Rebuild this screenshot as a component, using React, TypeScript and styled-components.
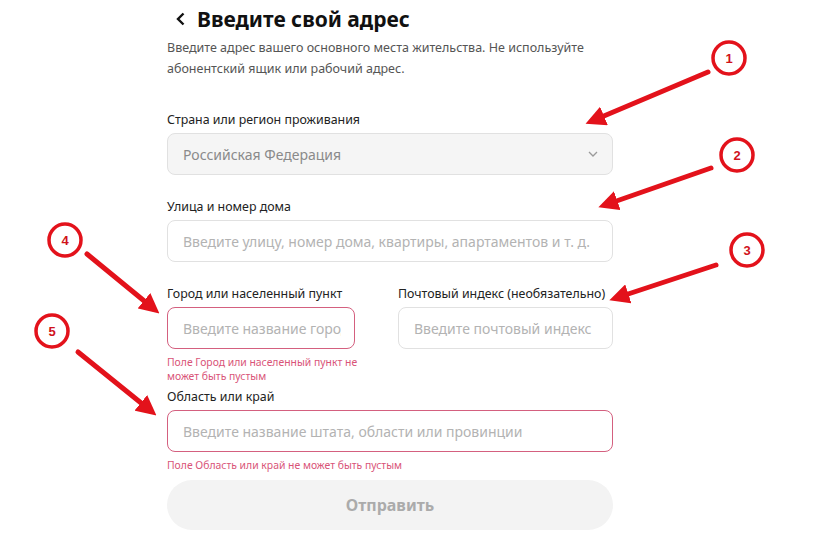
import React from 'react';
import styled, { createGlobalStyle } from 'styled-components';

const GlobalStyle = createGlobalStyle`
  body {
    margin: 0;
    background: #ffffff;
    font-family: 'Noto Sans', 'Open Sans', sans-serif;
    color: #1d1d1d;
  }
`;

const Page = styled.div`
  position: relative;
  width: 838px;
  height: 538px;
  overflow: hidden;
`;

const Form = styled.div`
  display: flex;
  flex-direction: column;
  width: 446px;
  padding: 5px 0 0 167px;
`;

const Header = styled.div`
  display: flex;
  align-items: center;
  gap: 10px;
  height: 28px;
  padding-left: 8px;
`;

const Title = styled.h1`
  margin: 0;
  font-size: 21px;
  font-weight: 700;
  line-height: 28px;
  color: #111;
`;

const Subtitle = styled.p`
  margin: 4px 0 0;
  font-size: 12.5px;
  line-height: 21px;
  color: #555;
`;

const Field = styled.div<{ $top: number }>`
  display: flex;
  flex-direction: column;
  margin-top: ${({ $top }) => $top}px;
  min-width: 0;
`;

const Label = styled.label`
  font-size: 12.4px;
  line-height: 18px;
  color: #222;
  margin-bottom: 4px;
  white-space: nowrap;
`;

const Box = styled.div<{ $error?: boolean; $filled?: boolean }>`
  display: flex;
  align-items: center;
  gap: 8px;
  box-sizing: border-box;
  height: 42px;
  padding: 0 13px 0 15px;
  border-radius: 8px;
  border: 1px solid ${({ $error }) => ($error ? '#d4607f' : '#e1e1e1')};
  background: ${({ $filled }) => ($filled ? '#f5f5f5' : '#fff')};
  font-size: 14px;
  color: ${({ $filled }) => ($filled ? '#8a8a8a' : '#b3b3b3')};
`;

const BoxText = styled.span`
  flex: 1;
  min-width: 0;
  white-space: nowrap;
  overflow: hidden;
  text-overflow: clip;
`;

const Error = styled.div`
  margin-top: 6px;
  font-size: 10.4px;
  line-height: 14px;
  color: #d95478;
  white-space: nowrap;
`;

const Row = styled.div`
  display: grid;
  grid-template-columns: 188px 215px;
  column-gap: 43px;
  margin-top: 23px;
  align-items: start;
`;

const Submit = styled.button`
  margin-top: 8px;
  height: 50px;
  border: none;
  border-radius: 25px;
  background: #f3f3f3;
  color: #ababab;
  font-family: inherit;
  font-size: 16px;
  font-weight: 700;
`;

const Overlay = styled.svg`
  position: absolute;
  left: 0;
  top: 0;
  pointer-events: none;
`;

const Chevron = () => (
  <svg width="12" height="8" viewBox="0 0 12 8">
    <path d="M2 2l4 4 4-4" fill="none" stroke="#9a9a9a" strokeWidth="1.3" />
  </svg>
);

const BackIcon = () => (
  <svg width="12" height="16" viewBox="0 0 12 16">
    <path d="M8.5 2.5L3 8l5.5 5.5" fill="none" stroke="#111" strokeWidth="2.4" />
  </svg>
);

const marks = [
  { n: 1, cx: 729, cy: 58, x1: 708, y1: 72, x2: 592, y2: 121 },
  { n: 2, cx: 737, cy: 155, x1: 711, y1: 168, x2: 605, y2: 205 },
  { n: 3, cx: 747, cy: 250, x1: 716, y1: 265, x2: 616, y2: 298 },
  { n: 4, cx: 65, cy: 240, x1: 87, y1: 254, x2: 154, y2: 309 },
  { n: 5, cx: 52, cy: 331, x1: 78, y1: 352, x2: 151, y2: 411 },
];

const Annotations = () => (
  <Overlay width="838" height="538">
    <defs>
      <marker id="head" markerWidth="4" markerHeight="4" refX="2.6" refY="2" orient="auto" markerUnits="strokeWidth">
        <path d="M0 0L4 2L0 4z" fill="#e3121b" />
      </marker>
    </defs>
    {marks.map((m) => (
      <g key={m.n}>
        <line
          x1={m.x1}
          y1={m.y1}
          x2={m.x2}
          y2={m.y2}
          stroke="#e3121b"
          strokeWidth="5"
          strokeLinecap="round"
          markerEnd="url(#head)"
        />
        <circle cx={m.cx} cy={m.cy} r="16" fill="#fff" stroke="#e3121b" strokeWidth="3.5" />
        <text
          x={m.cx}
          y={m.cy + 5}
          textAnchor="middle"
          fontFamily="'Liberation Sans', sans-serif"
          fontWeight="700"
          fontSize="13"
          fill="#d0121b"
        >
          {m.n}
        </text>
      </g>
    ))}
  </Overlay>
);

export default function App() {
  return (
    <Page>
      <GlobalStyle />
      <Form>
        <Header>
          <BackIcon />
          <Title>Введите свой адрес</Title>
        </Header>
        <Subtitle>
          Введите адрес вашего основного места жительства. Не используйте
          <br />
          абонентский ящик или рабочий адрес.
        </Subtitle>

        <Field $top={32}>
          <Label>Страна или регион проживания</Label>
          <Box $filled>
            <BoxText>Российская Федерация</BoxText>
            <Chevron />
          </Box>
        </Field>

        <Field $top={23}>
          <Label>Улица и номер дома</Label>
          <Box>
            <BoxText>Введите улицу, номер дома, квартиры, апартаментов и т. д.</BoxText>
          </Box>
        </Field>

        <Row>
          <Field $top={0}>
            <Label>Город или населенный пункт</Label>
            <Box $error>
              <BoxText>Введите название города или населенного пункта</BoxText>
            </Box>
            <Error>
              Поле Город или населенный пункт не
              <br />
              может быть пустым
            </Error>
          </Field>
          <Field $top={0}>
            <Label>Почтовый индекс (необязательно)</Label>
            <Box>
              <BoxText>Введите почтовый индекс</BoxText>
            </Box>
          </Field>
        </Row>

        <Field $top={5}>
          <Label>Область или край</Label>
          <Box $error>
            <BoxText>Введите название штата, области или провинции</BoxText>
          </Box>
          <Error>Поле Область или край не может быть пустым</Error>
        </Field>

        <Submit>Отправить</Submit>
      </Form>
      <Annotations />
    </Page>
  );
}
